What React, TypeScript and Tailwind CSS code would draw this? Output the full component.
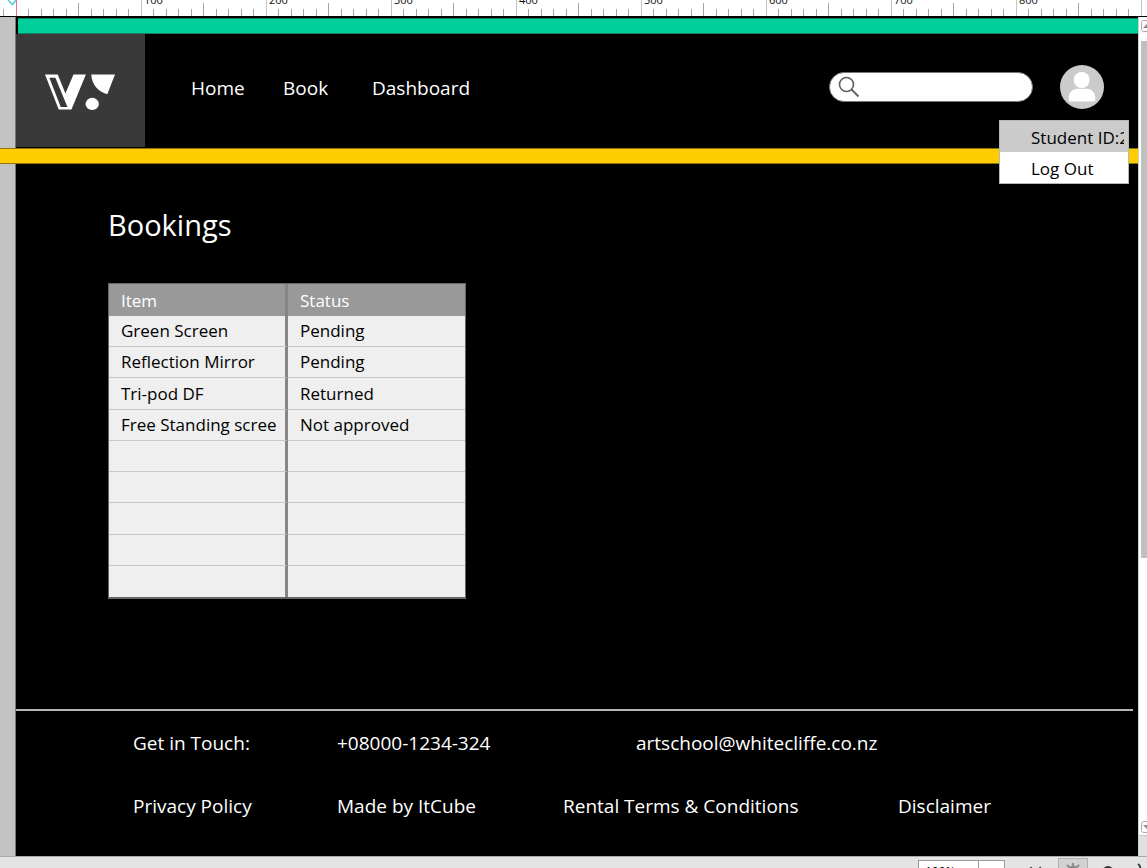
import React from "react";

const bookings: { item: string; status: string }[] = [
  { item: "Green Screen", status: "Pending" },
  { item: "Reflection Mirror", status: "Pending" },
  { item: "Tri-pod DF", status: "Returned" },
  { item: "Free Standing scree", status: "Not approved" },
  { item: "", status: "" },
  { item: "", status: "" },
  { item: "", status: "" },
  { item: "", status: "" },
  { item: "", status: "" },
];

function Ruler() {
  const ticks = Array.from({ length: 91 }, (_, i) => i);
  return (
    <div className="h-4 shrink-0 overflow-hidden bg-white">
      <svg width="100%" height="16" className="block" aria-hidden="true">
        {ticks.map((i) => {
          const top = i % 10 === 0 ? 0 : i % 5 === 0 ? 3 : 9;
          return (
            <rect
              key={i}
              x={Math.floor(16 + i * 12.5)}
              y={top}
              width="1"
              height={16 - top}
              fill={i === 0 ? "#f06a80" : i % 10 === 0 ? "#c4c4c4" : "#a5a5a5"}
            />
          );
        })}
        <rect x="3" y="9" width="1" height="7" fill="#a5a5a5" />
        <path d="M8 0 L12.500 4.500 L16 0" fill="none" stroke="#4fcfd4" strokeWidth="1.500" />
        {[100, 200, 300, 400, 500, 600, 700, 800].map((n) => (
          <text key={n} x={19 + n * 1.25} y="4" fontSize="11" fill="#111">
            {n}
          </text>
        ))}
      </svg>
    </div>
  );
}

function Logo() {
  return (
    <svg viewBox="134 222 209 107" className="h-9 w-[70px]" role="img" aria-label="Logo">
      <path
        fill="#fff"
        fillRule="evenodd"
        d="M134 223 H172 L195 280 L219 223 H256 L213 328 H175 Z M147 233 L181 320 H201 L165 233 Z"
      />
      <path fill="#fff" d="M272 223 H343 L320 282 C292 274 274 253 272 223 Z" />
      <ellipse cx="275" cy="311" rx="20" ry="18" fill="#fff" />
    </svg>
  );
}

function Header() {
  return (
    <header className="relative flex h-[114px] shrink-0 items-stretch bg-black">
      <a href="#home" className="flex w-[129px] shrink-0 items-center justify-center border-b border-black bg-[#393939] pt-0.5 pr-0.5">
        <Logo />
      </a>
      <nav className="grid grow grid-cols-[92px_89px_auto] items-center pb-1.5 pl-[46px] text-[19px] text-white">
        <a href="#home">Home</a>
        <a href="#book">Book</a>
        <a href="#dashboard">Dashboard</a>
      </nav>
      <div className="flex items-center gap-[27px] pr-[34px] pb-2">
        <label className="flex h-[30px] w-[204px] items-center rounded-full border border-[#777] bg-white pl-2">
          <svg viewBox="0 0 22 22" className="size-[22px] shrink-0" fill="none" stroke="#5e5e5e" aria-hidden="true">
            <circle cx="8.500" cy="8.500" r="7" strokeWidth="1.600" />
            <path d="M13.500 13.500 L20.500 20.500" strokeWidth="1.800" />
          </svg>
          <input type="search" aria-label="Search" className="min-w-0 grow bg-transparent px-1 text-base text-black outline-none" />
        </label>
        <button type="button" aria-label="Account" className="size-11 shrink-0">
          <svg viewBox="0 0 44 44" className="size-11">
            <circle cx="22" cy="22" r="22" fill="#cbcbcb" />
            <circle cx="21.700" cy="15" r="8" fill="#fff" />
            <path d="M8.700 33 C8.700 27 13 23.700 18 23.700 H26 C31 23.700 35.300 27 35.300 33 V35 Q35.300 36.600 33.500 36.600 H10.500 Q8.700 36.600 8.700 35 Z" fill="#fff" />
          </svg>
        </button>
      </div>
      <div className="absolute top-[86px] right-[9px] z-10 w-[130px] border border-[#b8b8b8] bg-white text-[17px] leading-[33px] text-black">
        <button type="button" className="block h-[31px] w-full bg-[#cbcbcb] pr-1 pl-[31px] text-left">
          <span className="block overflow-hidden whitespace-nowrap">Student ID:2</span>
        </button>
        <button type="button" className="block h-[31px] w-full pl-[31px] text-left">
          Log Out
        </button>
      </div>
    </header>
  );
}

function BookingsTable() {
  return (
    <table className="h-[316px] w-[358px] table-fixed border-separate border-spacing-0 border border-b-2 border-[#666] text-left text-[17px] leading-[30px]">
      <thead>
        <tr className="h-8 bg-[#999] text-white">
          <th className="w-[179px] border-r-[3px] border-[#858585] px-3 pt-0.5 pb-0 font-normal">Item</th>
          <th className="px-3 pt-0.5 pb-0 font-normal">Status</th>
        </tr>
      </thead>
      <tbody>
        {bookings.map((b, i) => (
          <tr key={i} className="group h-[31px] bg-[#efefef] text-black">
            <td className="border-r-[3px] border-b border-r-[#858585] border-b-[#c8c8c8] px-3 py-0 whitespace-nowrap group-last:border-b-0">
              {b.item}
            </td>
            <td className="border-b border-[#c8c8c8] px-3 py-0 group-last:border-b-0">{b.status}</td>
          </tr>
        ))}
      </tbody>
    </table>
  );
}

function Footer() {
  return (
    <footer className="h-[147px] shrink-0 text-[19px] leading-7 text-white">
      <div className="mr-[5px] border-t-2 border-[#b5b5b5]" />
      <div className="grid grid-cols-[204fr_299fr_502fr] pt-[18px] pl-[117px]">
        <span>Get in Touch:</span>
        <a href="tel:+080001234324">+08000-1234-324</a>
        <a href="mailto:artschool@whitecliffe.co.nz">artschool@whitecliffe.co.nz</a>
      </div>
      <div className="grid grid-cols-[204fr_226fr_335fr_240fr] pt-[35px] pl-[117px]">
        <a href="#privacy">Privacy Policy</a>
        <span>Made by ItCube</span>
        <a href="#terms">Rental Terms &amp; Conditions</a>
        <a href="#disclaimer">Disclaimer</a>
      </div>
    </footer>
  );
}

function Scrollbar() {
  return (
    <div className="flex w-[9px] shrink-0 flex-col overflow-hidden border-l border-[#d0d0d0] bg-white pl-0.5" aria-hidden="true">
      <svg viewBox="0 0 12 12" className="mt-[3px] size-3 shrink-0">
        <rect x="0.500" y="0.500" width="11" height="11" rx="2" fill="#fafafa" stroke="#aaa" />
        <path d="M2 8 L6 4 V8 Z" fill="#888" />
      </svg>
      <div className="mt-[9px] h-[517px] bg-[#c0c0c0]" />
      <div className="grow" />
      <svg viewBox="0 0 12 12" className="size-3 shrink-0">
        <rect x="0.500" y="0.500" width="11" height="11" rx="2" fill="#fafafa" stroke="#aaa" />
        <path d="M2 4 H10 L6 8 Z" fill="#888" />
      </svg>
      <div className="mt-0.5 -ml-0.5 h-[21px] shrink-0 border-t border-[#c8c8c8] bg-[#e0e0e0]" />
    </div>
  );
}

function StatusBar() {
  return (
    <div className="flex h-3 shrink-0 items-start justify-end overflow-hidden border-t border-[#aaa] bg-[#e4e4e4]">
      <div className="mt-[3px] flex h-6 w-[87px] border border-[#999] bg-white text-[12px] leading-[22px]">
        <span className="w-[60px] border-r border-[#999] pl-1.5">100%</span>
      </div>
      <svg width="142" height="11" viewBox="1005 857 142 11" aria-hidden="true">
        <path d="M1029 869 L1032 867 M1038 869 L1041 867" stroke="#555" strokeWidth="1.500" />
        <rect x="1058.500" y="858.500" width="29" height="14" fill="#d2d2d2" stroke="#b0b0b0" />
        <circle cx="1073" cy="869" r="3.500" fill="#888" />
        <path d="M1073 863 V867 M1067 865 L1070 868 M1079 865 L1076 868" stroke="#888" strokeWidth="1.800" />
        <path d="M1104 869 Q1108 865 1112 869" stroke="#333" strokeWidth="2" fill="none" />
        <path d="M1138 864 Q1141 866 1140 869" stroke="#333" strokeWidth="1.800" fill="none" />
      </svg>
    </div>
  );
}

export default function App() {
  return (
    <div className="flex min-h-screen flex-col bg-white font-['Segoe_UI','Open_Sans','Noto_Sans',sans-serif]">
      <Ruler />
      <div className="flex grow border-t border-black">
        <div className="w-4 shrink-0 border-r border-[#777] bg-[#c3c3c3]" />
        <div className="flex min-w-0 grow flex-col bg-black">
          <div className="mt-px ml-0.5 h-4 shrink-0 border-y border-[#0d7f62] bg-[#00ce9b]" />
          <Header />
          <div className="-ml-4 h-4 shrink-0 border-y border-[#8f7610] bg-[#ffcc00]" />
          <main className="grow pt-10 pl-[92px] text-white">
            <h1 className="mb-[37px] text-[29px] leading-[42px]">Bookings</h1>
            <BookingsTable />
          </main>
          <Footer />
        </div>
        <Scrollbar />
      </div>
      <StatusBar />
    </div>
  );
}
